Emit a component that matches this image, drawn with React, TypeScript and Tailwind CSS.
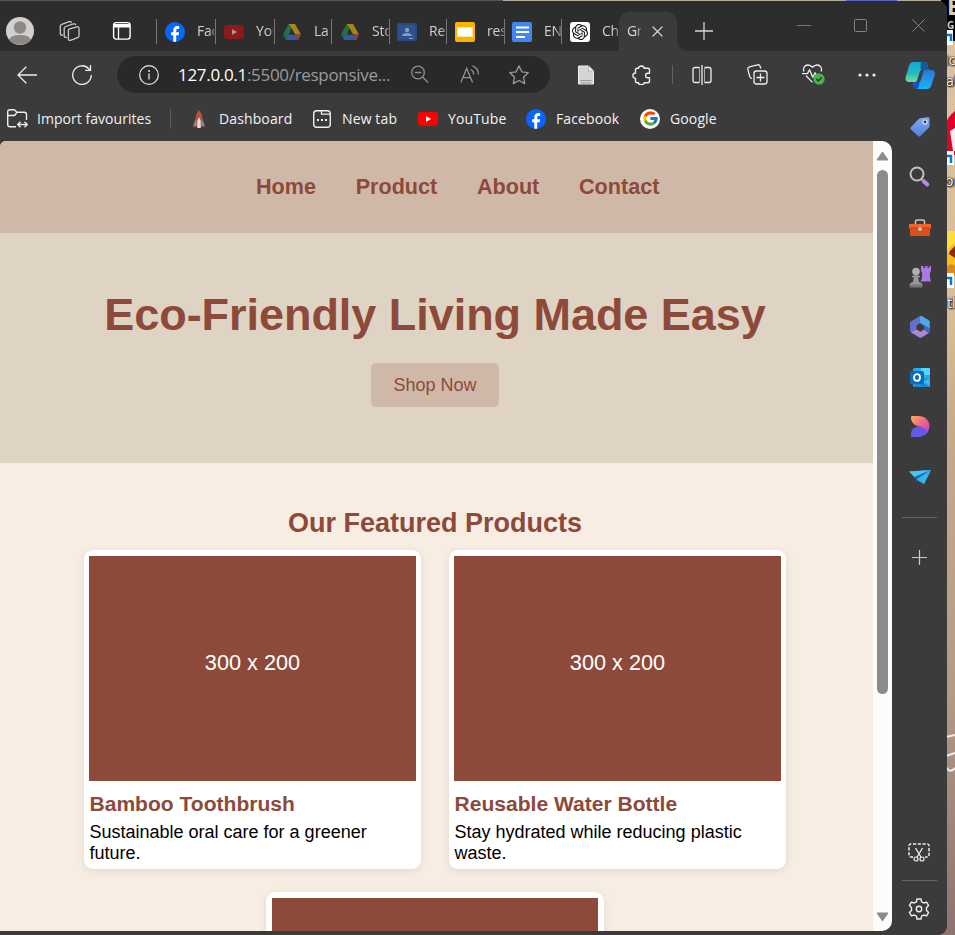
import React from "react";
import { SiOpenai } from "react-icons/si";
import { FcGoogle } from "react-icons/fc";

type Kids = { children: React.ReactNode };

function Svg({ w, h, children, className = "" }: Kids & { w: number; h: number; className?: string }) {
  return (
    <svg width={w} height={h} viewBox={`0 0 ${w} ${h}`} fill="none" className={`shrink-0 ${className}`}>
      {children}
    </svg>
  );
}

function FacebookLogo() {
  return (
    <Svg w={20} h={20}>
      <circle cx="10" cy="10" r="10" fill="#0866ff" />
      <path d="M8.300 19.800v-6.500H6.100v-3h2.200V8.600c0-3 1.400-4.500 4.200-4.500.6 0 1.400.1 1.700.2v2.700c-.3 0-.8-.1-1.200-.1-1.400 0-1.800.6-1.800 1.900v1.500h2.900l-.5 3h-2.400v6.500z" fill="#fff" />
    </Svg>
  );
}

function YouTubeLogo({ dim = false }: { dim?: boolean }) {
  return (
    <Svg w={20} h={20}>
      <rect x="0" y="3" width="20" height="14" rx="3.500" fill={dim ? "#8c1a1c" : "#ff0000"} />
      <path d="M8 7.200l5.200 2.800L8 12.800z" fill={dim ? "#a99" : "#fff"} />
    </Svg>
  );
}

function DriveLogo() {
  return (
    <Svg w={20} h={20}>
      <path d="M6.500 2h4L7 12.500 4 18 1 12.500z" fill="#1c6b41" />
      <path d="M7 2h3L7.500 12.500H1z" fill="#256f43" />
      <path d="M7 2h6l6 10.500h-6z" fill="#a8841c" />
      <path d="M4.500 12.500H19l-3 5.500H4z" fill="#315b9e" />
      <path d="M13 12.500h6L16 18z" fill="#a5382f" />
      <path d="M10 7.300l3 5.200H7z" fill="#2e2e2e" />
    </Svg>
  );
}

function ClassroomLogo() {
  return (
    <Svg w={20} h={20}>
      <rect y="1" width="20" height="18" rx="1.500" fill="#2c4a80" />
      <rect x="2" y="3" width="16" height="14" fill="#2f5190" />
      <circle cx="10" cy="8" r="2.200" fill="#8f9cb5" />
      <path d="M5 14c0-2 2.500-3 5-3s5 1 5 3z" fill="#8f9cb5" />
      <path d="M12 16h4v1h-4z" fill="#8f9cb5" />
    </Svg>
  );
}

function SlidesLogo() {
  return (
    <Svg w={20} h={20}>
      <rect width="20" height="20" rx="2" fill="#f9b400" />
      <rect x="2.500" y="5.500" width="15" height="9" fill="#fff" stroke="#fde29a" />
    </Svg>
  );
}

function DocsLogo() {
  return (
    <Svg w={20} h={20}>
      <rect width="20" height="20" rx="2" fill="#4285f4" />
      <path d="M4 5.500h13M4 10h13M4 15h9" stroke="#fff" strokeWidth="2" />
    </Svg>
  );
}

function ChatLogo() {
  return (
    <div className="flex h-5 w-5 shrink-0 items-center justify-center rounded-[3px] bg-white">
      <SiOpenai size={16} color="#111" />
    </div>
  );
}

function GoogleLogo() {
  return (
    <div className="flex h-5 w-5 shrink-0 items-center justify-center rounded-full bg-white">
      <FcGoogle size={17} />
    </div>
  );
}

const tabs = [
  { text: "Face", w: "w-[59px]", pad: "pl-[8px]", icon: <FacebookLogo /> },
  { text: "You", w: "w-[59px]", pad: "pl-[8px]", icon: <YouTubeLogo dim /> },
  { text: "La", w: "w-[57px]", pad: "pl-[7px]", icon: <DriveLogo /> },
  { text: "Sto", w: "w-[58px]", pad: "pl-[8px]", icon: <DriveLogo /> },
  { text: "Re", w: "w-[57px]", pad: "pl-[7px]", icon: <ClassroomLogo /> },
  { text: "res", w: "w-[58px]", pad: "pl-[8px]", icon: <SlidesLogo /> },
  { text: "EN", w: "w-[57px]", pad: "pl-[7px]", icon: <DocsLogo /> },
  { text: "Ch", w: "w-[58px]", pad: "pl-[8px]", icon: <ChatLogo /> },
];

function TitleBar() {
  return (
    <div className="flex h-[50px] shrink-0 bg-[#2d2d2d]">
      <div className="flex w-[156px] shrink-0 items-center pl-[6px] pt-[10px]">
        <Svg w={28} h={28}>
          <circle cx="14" cy="14" r="14" fill="#d2d0ce" />
          <path d="M3 22.500c2-3.500 6-4.500 11-4.500s9 1 11 4.500A14 14 0 0 1 3 22.500z" fill="#8e8883" />
          <circle cx="14" cy="10.500" r="6.200" fill="#8e8883" />
        </Svg>
        <Svg w={22} h={22} className="ml-[25px]">
          <g stroke="#c9c9c9" strokeWidth="1.300" strokeLinejoin="round" strokeLinecap="round">
            <path d="M9.800 9.200l8.200-2.400c1.200-.3 2 .2 2 1.400v7.600c0 1-.5 1.600-1.400 1.900l-7.200 2.600c-1.200.4-2-.1-2-1.300v-8c0-1 0-1.500.4-1.800z" />
            <path d="M7.500 17.300c-1.500.3-2.300-.2-2.300-1.500V8.400c0-1 .5-1.600 1.400-1.900l7.800-2.600c1-.3 1.900 0 2.100.8" />
            <path d="M3.600 15c-1.500.3-2.300-.2-2.300-1.500V6.200c0-1 .5-1.600 1.400-1.900L10.200 1.700c1-.3 1.900 0 2.100.8" />
          </g>
        </Svg>
        <Svg w={20} h={20} className="ml-[31px]">
          <rect x="1.600" y="1.600" width="16.500" height="16.500" rx="2.500" stroke="#fff" strokeWidth="1.400" />
          <path d="M1.500 3h16.500v3.500H1.500z" fill="#fff" />
          <path d="M6.500 5v13" stroke="#fff" strokeWidth="1.300" />
        </Svg>
      </div>
      <div className="flex w-[463px] items-center overflow-hidden rounded-br-[10px] pt-[11px]">
        {tabs.map((t, i) => (
          <div key={i} className={`flex h-[25px] shrink-0 items-center border-l border-[#777] ${t.pad} ${t.w}`}>
            {t.icon}
            <span className="-mt-[2px] ml-[12px] w-[17px] overflow-hidden whitespace-nowrap text-[14px] tracking-[-0.2px] text-[#cfcfcf] [mask-image:linear-gradient(to_right,#000_12px,#0005_18px)]">{t.text}</span>
          </div>
        ))}
      </div>
      <div className="flex w-[58px] items-end bg-[linear-gradient(#2d2d2d_10px,#3b3b3b_10px)]">
        <div className="flex h-[39px] w-[58px] items-center rounded-t-[10px] bg-[#3b3b3b] pl-[8px] shadow-[0_-10px_0_#2d2d2d]">
          <span className="-mt-[2px] w-[14px] overflow-hidden text-[14px] tracking-[-0.4px] text-[#ddd] [mask-image:linear-gradient(to_right,#000_8px,#0006_14px)]">Gr</span>
          <Svg w={11} h={11} className="ml-[11px]">
            <path d="M.6.6l9.800 9.800M10.400.6L.6 10.400" stroke="#ddd" strokeWidth="1.300" />
          </Svg>
        </div>
      </div>
      <div className="flex flex-1 bg-[#3b3b3b]">
        <div className="flex flex-1 items-start rounded-bl-[10px] bg-[#2d2d2d]">
          <Svg w={18} h={18} className="ml-[18px] mt-[21px]">
            <path d="M9 0v18M0 9h18" stroke="#d5d5d5" strokeWidth="1.300" />
          </Svg>
          <Svg w={14} h={2} className="ml-[84px] mt-[24px]">
            <path d="M0 .5h14" stroke="#777" />
          </Svg>
          <Svg w={13} h={13} className="ml-[43px] mt-[18px]">
            <rect x=".5" y=".5" width="12" height="12" rx="1" stroke="#858585" />
          </Svg>
          <Svg w={13} h={13} className="ml-[45px] mt-[18px]">
            <path d="M.5.5l12 12M12.500.5l-12 12" stroke="#858585" />
          </Svg>
        </div>
      </div>
    </div>
  );
}

function Cell({ w, children }: Kids & { w: string }) {
  return <div className={`flex shrink-0 items-center justify-center ${w}`}>{children}</div>;
}

function Toolbar() {
  return (
    <div className="flex h-[47px] shrink-0">
      <Cell w="w-[54px]">
        <Svg w={20} h={18}>
          <path d="M20 9H1M9.300.7L1 9l8.300 8.300" stroke="#eee" strokeWidth="1.300" />
        </Svg>
      </Cell>
      <Cell w="w-[56px]">
        <Svg w={20} h={20}>
          <path d="M19.300 10a9.300 9.300 0 1 1-2.500-6.300l1.200 1.200M18.500 0v5.300h-5.300" stroke="#eee" strokeWidth="1.300" />
        </Svg>
      </Cell>
      <div className="ml-[7px] mt-[5px] flex h-[37px] w-[433px] shrink-0 items-center rounded-full bg-[#292929] pl-[22px]">
        <Svg w={20} h={20}>
          <circle cx="10" cy="10" r="9.300" stroke="#e5e5e5" strokeWidth="1.200" />
          <path d="M10 8.500v6" stroke="#e5e5e5" strokeWidth="1.300" />
          <circle cx="10" cy="6" r="1" fill="#e5e5e5" />
        </Svg>
        <span className="ml-[19px] w-[233px] whitespace-nowrap text-[17px] leading-[20px] tracking-[-0.31px] text-[#9b9b9b]">
          <span className="text-white">127.0.0.1</span>:5500/responsive...
        </span>
        <Svg w={19} h={19}>
          <circle cx="7" cy="7.500" r="6.300" stroke="#8f8f8f" strokeWidth="1.300" />
          <path d="M3.800 7.500h6.500M11.600 12l5.500 5.500" stroke="#8f8f8f" strokeWidth="1.300" />
        </Svg>
        <Svg w={20} h={20} className="ml-[30px]">
          <path d="M.8 17.500L6.700 3.500l5.900 14M2.800 12.700h7.800M10.500 4.500c2 .8 3.200 2.600 3.200 5M12.500.9c3.800 1.400 5.900 4.300 5.900 8.600" stroke="#929292" strokeWidth="1.300" />
        </Svg>
        <Svg w={20} h={20} className="ml-[29px]">
          <path d="M10 .9l2.800 5.900 6.400.9-4.700 4.500 1.200 6.400-5.700-3.100-5.700 3.100 1.200-6.400L.8 7.700l6.400-.9z" stroke="#999" strokeWidth="1.300" strokeLinejoin="round" />
        </Svg>
      </div>
      <div className="w-[8px] shrink-0" />
      <Cell w="w-[56px]">
        <Svg w={18} h={20}>
          <path d="M1.500 1h10l5 5v13h-15z" fill="#d4d4d4" stroke="#eee" />
          <path d="M11.500 1v5h5" fill="#f4f4f4" stroke="#999" strokeWidth=".6" />
          <path d="M3.500 15.500h11M3.500 18h11" stroke="#9a9a9a" />
        </Svg>
      </Cell>
      <Cell w="w-[56px]">
        <Svg w={20} h={20}>
          <path d="M6.500 3.200c0-3 5.600-3 5.600 0H16c1 0 1.500.5 1.500 1.500v3.600h-1.800c-2.800 0-2.800 4.400 0 4.400h1.800v3.600c0 1-.5 1.500-1.500 1.500h-3.900c0 2.600-5.600 2.600-5.600 0H5c-1 0-1.500-.5-1.500-1.500v-3C0 13.300 0 8 3.500 8V4.700c0-1 .5-1.500 1.500-1.500z" stroke="#eee" strokeWidth="1.400" strokeLinejoin="round" />
        </Svg>
      </Cell>
      <Cell w="w-[4px]"><div className="h-[19px] w-px bg-[#626262]" /></Cell>
      <Cell w="w-[55px]">
        <Svg w={20} h={20}>
          <path d="M7.500 17.500H3c-1.200 0-2-.8-2-2v-11c0-1.200.8-2 2-2h4.500M12.500 2.500H17c1.200 0 2 .8 2 2v11c0 1.200-.8 2-2 2h-4.500M10 0v20" stroke="#eee" strokeWidth="1.300" />
          <path d="M7.500 2.500v15M12.500 2.500v15" stroke="#aaa" />
        </Svg>
      </Cell>
      <Cell w="w-[56px]">
        <Svg w={21} h={21}>
          <rect x="7" y="7" width="13" height="13" rx="2.500" stroke="#eee" strokeWidth="1.300" />
          <path d="M13.500 9.500v8M9.500 13.500h8M5 14.400c-1.300 0-1.900-.7-2.300-1.800L.9 5.300C.6 4 1.100 3.200 2.400 2.800l8.200-2c1.300-.3 2 .1 2.500 1.400l.6 2.300" stroke="#eee" strokeWidth="1.300" />
        </Svg>
      </Cell>
      <Cell w="w-[56px]">
        <Svg w={23} h={21}>
          <path d="M1.800 7.500C.5 4.200 2.700 1 6 1c2 0 3.200.9 4.500 2.300C11.800 1.900 13 1 15 1c3.500 0 5.500 3.200 4.200 6.500M4 11.800l6.500 6.600M0 9.600h5.500l2-3.800 3.300 7.500 2.300-4.500 1.200 1.800H18" stroke="#eee" strokeWidth="1.300" strokeLinejoin="round" />
          <circle cx="17" cy="15" r="5.700" fill="#4caf50" />
          <path d="M14.300 15l2 2 3.500-3.700" stroke="#163f1a" strokeWidth="1.300" />
        </Svg>
      </Cell>
      <Cell w="w-[51px]">
        <Svg w={18} h={4}>
          <circle cx="2" cy="2" r="1.600" fill="#eee" />
          <circle cx="9" cy="2" r="1.600" fill="#eee" />
          <circle cx="16" cy="2" r="1.600" fill="#eee" />
        </Svg>
      </Cell>
    </div>
  );
}

const bookmarks = [
  {
    text: "Dashboard",
    w: "w-[123px]",
    icon: (
      <Svg w={20} h={20}>
        <path d="M10 1c2 2.500 3.500 6 3.500 9v8h-7v-8c0-3 1.500-6.500 3.500-9z" fill="#b5533c" />
        <path d="M10 8l1.700 4v7H8.300v-7z" fill="#e4dedb" />
        <path d="M7 9.500l-2.500 6V18L8 16.500zM13 9.500l2.500 6V18L12 16.500z" fill="#8d8784" />
      </Svg>
    ),
  },
  {
    text: "New tab",
    w: "w-[106px]",
    icon: (
      <Svg w={20} h={20}>
        <rect x="1.700" y="1.700" width="16.600" height="16.600" rx="3" stroke="#eee" strokeWidth="1.400" />
        <path d="M9.500 1.700v3.500h8.800" stroke="#eee" strokeWidth="1.300" />
        <path d="M5 11h2M9 11h2M13 11h2" stroke="#eee" strokeWidth="2" />
      </Svg>
    ),
  },
  { text: "YouTube", w: "w-[108px]", icon: <YouTubeLogo /> },
  { text: "Facebook", w: "w-[114px]", icon: <FacebookLogo /> },
  { text: "Google", w: "w-[100px]", icon: <GoogleLogo /> },
];

function Bookmarks() {
  return (
    <div className="flex h-[43px] shrink-0 items-center pb-[2px] pl-[7px] text-[14px] leading-[20px] text-[#f2f2f2]">
      <div className="flex w-[163px] items-center gap-[9px]">
        <Svg w={21} h={20}>
          <path d="M9 17.800H3c-1.500 0-2.300-.8-2.300-2.300V3C.7 1.500 1.500.8 3 .8h3.500c1 0 1.500.3 2 1l1.200 1.500h7.500c1.500 0 2.300.8 2.300 2.300V11M.7 6.500h5.800c1 0 1.500-.3 2-1l1.200-2.200" stroke="#eee" strokeWidth="1.400" />
          <path d="M11 15.500h9M13.500 12.700l-2.800 2.800 2.800 2.800M17.500 12.700l2.800 2.800-2.800 2.800" stroke="#eee" strokeWidth="1.300" />
        </Svg>
        <span className="whitespace-nowrap tracking-[0.040px]">Import favourites</span>
      </div>
      <div className="mr-[18px] h-[20px] w-px bg-[#5c5c5c]" />
      {bookmarks.map((b) => (
        <div key={b.text} className={`flex shrink-0 items-center gap-[10px] ${b.w}`}>
          {b.icon}
          <span className="whitespace-nowrap tracking-[0.120px]">{b.text}</span>
        </div>
      ))}
    </div>
  );
}

function Card({ title, text }: { title: string; text: string }) {
  return (
    <article className="h-[319px] w-[337px] shrink-0 rounded-[9px] bg-white px-[5px] pt-[6px] shadow-[0_2px_8px_rgba(0,0,0,0.09)]">
      <div className="flex h-[225px] items-center justify-center bg-[#8d4a3a] pb-[10px] text-[21.700px] text-white">300 x 200</div>
      <h3 className="mt-[11px] pl-[0.5px] text-[21.060px] leading-[24px] font-bold text-[#8d4a3a]">{title}</h3>
      <p className="mt-[6px] pl-[0.5px] text-[18px] leading-[21px] text-black">{text}</p>
    </article>
  );
}

function ShopPage() {
  return (
    <div className="w-[873px] overflow-hidden bg-[#f7ede2] font-['Liberation_Sans',Arial,sans-serif] text-[#8d4a3a]">
      <nav className="flex h-[92px] gap-[39.700px] bg-[#d0b8a8] pt-[33px] pl-[256px] text-[21.600px] leading-[25px] font-bold">
        <a>Home</a>
        <a>Product</a>
        <a>About</a>
        <a>Contact</a>
      </nav>
      <section className="flex h-[230px] flex-col items-center bg-[#dfd3c3] pt-[56px] pr-[3px]">
        <h1 className="text-[45px] leading-[52px] font-bold tracking-[-0.040px] whitespace-nowrap">Eco-Friendly Living Made Easy</h1>
        <button className="mt-[22px] h-[44px] w-[128px] rounded-[5px] bg-[#d0b8a8] text-[18px]">Shop Now</button>
      </section>
      <section className="pt-[45px] pr-[3px]">
        <h2 className="text-center text-[27px] leading-[31px] font-bold">Our Featured Products</h2>
        <div className="mt-[11px] flex flex-wrap justify-center gap-x-[28px] gap-y-[23px]">
          <Card title="Bamboo Toothbrush" text="Sustainable oral care for a greener future." />
          <Card title="Reusable Water Bottle" text="Stay hydrated while reducing plastic waste." />
          <div className="mr-px h-[60px] w-[338px] rounded-t-[9px] bg-white px-[6px] pt-[6px] shadow-[0_2px_8px_rgba(0,0,0,0.09)]">
            <div className="h-full bg-[#8d4a3a]" />
          </div>
        </div>
      </section>
    </div>
  );
}

function Scrollbar() {
  return (
    <div className="flex w-[19px] shrink-0 flex-col items-center bg-[#fcfcfc]">
      <Svg w={13} h={10} className="mt-[10px]">
        <path d="M6.500 1l5.500 8H1z" fill="#8b8b8b" stroke="#8b8b8b" strokeLinejoin="round" />
      </Svg>
      <div className="mt-[9px] h-[524px] w-[11px] rounded-full bg-[#8b8b8b]" />
      <div className="flex-1" />
      <Svg w={13} h={10} className="mb-[9px]">
        <path d="M1 1h11L6.500 9z" fill="#8b8b8b" stroke="#8b8b8b" strokeLinejoin="round" />
      </Svg>
    </div>
  );
}

const sideIcons = [
  <Svg w={22} h={22}>
    <path d="M9.500 3.200c.5-.5 1-.8 1.700-.9L18.500 1.200c1.500 0 2 .5 2 1.800V10c0 .7-.2 1.200-.8 1.800L11.500 20c-.8.8-1.700.8-2.500 0l-7-6.500c-.8-.8-.8-1.700 0-2.500z" fill="url(#tagfill)" />
    <circle cx="16" cy="6" r="2" fill="#333" stroke="#dfe6f7" strokeWidth="1.200" />
    <defs>
      <linearGradient id="tagfill" x1="0" y1="0" x2="0" y2="1">
        <stop stopColor="#7fabf0" />
        <stop offset="1" stopColor="#4f7fe0" />
      </linearGradient>
    </defs>
  </Svg>,
  <Svg w={22} h={22}>
    <path d="M12 13l2.500 2.500" stroke="#999" strokeWidth="2" />
    <circle cx="8" cy="8" r="6.500" stroke="#c2c2c0" strokeWidth="2" />
    <path d="M14.800 15.200l3.500 3.300" stroke="#b489ee" strokeWidth="4" strokeLinecap="round" />
  </Svg>,
  <Svg w={22} h={18} className="relative top-px">
    <path d="M6.500 5V2.500C6.500 1.500 7 1 8 1h6c1 0 1.500.5 1.500 1.500V5" stroke="#c8c8c8" strokeWidth="1.500" />
    <path d="M1 5h20c.6 0 1 .3 1 1v4H0V6c0-.7.400-1 1-1z" fill="#f0642c" />
    <path d="M1 9.500h20V16c0 .7-.3 1-1 1H2c-.7 0-1-.3-1-1z" fill="#e04f16" />
    <path d="M0 9h22" stroke="#b83a0e" />
    <circle cx="11" cy="10" r="2" fill="#c8c8c8" />
  </Svg>,
  <Svg w={22} h={22}>
    <path d="M12 0h2.500v2h1.700V0h2.400v2h1.700V0H22v5l-1.200 2 .2 5 1 3.500H11.500L13 12l.2-5L12 5z" fill="#a97be2" />
    <circle cx="7" cy="5.500" r="3.800" fill="#b0b0b0" />
    <path d="M3 10c0-1 8-1 8 0v1.200H9.200L10 16c2 .7 3.500 1.500 3.500 3H.5c0-1.500 1.500-2.300 3.500-3l.8-4.800H3z" fill="#999" />
    <path d="M.5 18.500h13v2c0 .6-.4 1-1 1h-11c-.6 0-1-.4-1-1z" fill="#777" />
  </Svg>,
  <Svg w={22} h={22}>
    <path d="M7 2.500L11 .3c1-.4 1.500-.4 2.500.1l6 3.600c.8.5 1.300 1.200 1.300 2.200v6.500L15 9.500 11 7l-4 2.500z" fill="#50a6ee" />
    <path d="M8 2L2.500 5C1.500 5.600 1 6.300 1 7.500V14c0 1 .5 2 1.500 2.700L7.500 14V8.500L11 6.300V.3z" fill="#6470cc" />
    <path d="M2 16.500l5.500-3 4 2.300 3.500-2.300 5.800-1V15c0 1-.5 1.700-1.400 2.300l-6.400 4c-1 .6-2 .6-3 0z" fill="#b283d6" />
    <path d="M15 9l5.800 3.500V15c0 1-.4 1.600-1.200 2.200L15 13.500z" fill="#3c65c5" />
  </Svg>,
  <Svg w={22} h={22} className="relative top-px">
    <rect x="4" y="1" width="17" height="19" rx="1.500" fill="#28a8e8" />
    <path d="M12 1h7.500c1 0 1.500.5 1.500 1.500V8h-9z" fill="#50d9ff" />
    <path d="M5 13l16-2v7.500c0 1-.5 1.500-1.500 1.500h-13C5.500 20 5 19.500 5 18.500z" fill="#148bd2" />
    <path d="M13 14.500l8 5V11z" fill="#35b8f1" />
    <rect x="1" y="4" width="14" height="13" rx="1.500" fill="#0a6cbd" />
    <ellipse cx="8" cy="10.500" rx="3" ry="3.300" stroke="#fff" strokeWidth="1.800" />
  </Svg>,
  <Svg w={22} h={22}>
    <path d="M2 1.500C2 .5 2.500 0 3.500 0h6C15.500 0 20.500 4 20.500 10c0 3-1.500 5.500-3 7.500L10 10.500C5 9.500 2 6 2 1.500z" fill="url(#petal)" />
    <path d="M3 21c-.5 0-1-.5-1-1v-2c0-4.500 3.500-7.500 7.500-7.500 4 0 7 2 9 5.500-2.500 3.500-5.500 5-9.500 5z" fill="#6759e6" />
    <defs>
      <linearGradient id="petal" x1="0" y1="0" x2="1" y2="1">
        <stop stopColor="#ffb05a" />
        <stop offset=".5" stopColor="#f1638c" />
        <stop offset="1" stopColor="#b43cf0" />
      </linearGradient>
    </defs>
  </Svg>,
  <Svg w={22} h={18}>
    <path d="M0 3.500L22 2l-7 14-7-4z" fill="#2599dc" />
    <path d="M0 3.500L22 2 5.500 9z" fill="#4bc2f2" />
    <path d="M5.500 9L22 2 8 11v4z" fill="#1269ad" />
    <path d="M8 11.500L22 2l-7 14z" fill="#35b5ee" />
  </Svg>,
];

function Sidebar() {
  return (
    <aside className="flex w-[55px] shrink-0 flex-col items-center">
      <div className="flex h-[51px] shrink-0 items-center pb-[3px]">
        <Svg w={30} h={27}>
          <defs>
            <linearGradient id="cpa" x1="0" y1="0" x2="0" y2="1">
              <stop stopColor="#13a7e0" />
              <stop offset=".55" stopColor="#23b9c1" />
              <stop offset="1" stopColor="#75df91" />
            </linearGradient>
            <linearGradient id="cpb" x1="0" y1="0" x2="0" y2="1">
              <stop stopColor="#2f75d8" />
              <stop offset="1" stopColor="#12b8f7" />
            </linearGradient>
          </defs>
          <path d="M8.500 0H19c2 0 2.800 1 3.300 3l1.400 5H18l-4.500 9.500c-.8 1.800-1.800 2.500-4 2.500H4.500C1.500 20 0 18 .7 15L4 4C4.800 1.300 6 0 8.500 0z" fill="url(#cpa)" />
          <path d="M16 0h3c2 0 2.800 1 3.300 3l1.400 5H17.500c-1.500 0-2.200-1-2-3z" fill="#165a9c" />
          <path d="M8 20h2c2 0 3-.7 3.700-2.500L17.500 8h8.500c3 0 4.500 2 3.700 5l-3.300 10c-.8 2.700-2 4-4.500 4H12c-2 0-2.800-1-3.200-3z" fill="url(#cpb)" />
          <path d="M8 20h2c2 0 3-.7 3.700-2.500h1.800L13 26.500 12 27c-2 0-2.800-1-3.200-3z" fill="#174ed3" />
          <path d="M15 9.500c.4-1 .8-1.500 2-1.500h2l-3 9.500c-.4 1.500-1 2.300-2.500 2.500h-2z" fill="#3b3f46" />
        </Svg>
      </div>
      {sideIcons.map((icon, i) => (
        <div key={i} className="flex h-[50px] shrink-0 items-center">{icon}</div>
      ))}
      <div className="mt-[15px] h-px w-[35px] bg-[#666]" />
      <Svg w={15} h={15} className="mt-[32px] mr-px">
        <path d="M7.500 0v15M0 7.500h15" stroke="#ccc" strokeWidth="1.200" />
      </Svg>
      <div className="flex-1" />
      <Svg w={22} h={21} className="mr-px">
        <path d="M5 15H3c-1.300 0-2-.7-2-2V4c0-1.300.7-2 2-2h16c1.300 0 2 .7 2 2v9c0 1.300-.7 2-2 2h-2" stroke="#eee" strokeWidth="1.500" strokeDasharray="3.200 1.600" />
        <path d="M7.500 6l5.700 9.500M14.500 6l-5.700 9.500" stroke="#eee" strokeWidth="1.300" />
        <circle cx="8" cy="17" r="2" stroke="#eee" strokeWidth="1.200" />
        <circle cx="14" cy="17" r="2" stroke="#eee" strokeWidth="1.200" />
      </Svg>
      <div className="mt-[17px] h-px w-[35px] bg-[#666]" />
      <Svg w={22} h={22} className="mt-[17px] mr-px mb-[15px]">
        <path d="M9 1h4l.6 2.800 2.200 1.200 2.800-.9 2 3.500L18.500 9.500v3l2.100 1.900-2 3.500-2.800-.9-2.200 1.200L13 21H9l-.6-2.800L6.200 17l-2.800.9-2-3.500 2.100-1.900v-3L1.400 7.600l2-3.500 2.800.9 2.200-1.200z" stroke="#eee" strokeWidth="1.400" strokeLinejoin="round" />
        <circle cx="11" cy="11" r="2.700" stroke="#eee" strokeWidth="1.400" />
      </Svg>
    </aside>
  );
}

/* Sliver of desktop visible to the right of the browser window. */
function Desktop() {
  return (
    <div className="absolute inset-y-0 right-0 w-[14px] overflow-hidden bg-[linear-gradient(#dcc3a2,#d9bd99_34%,#c8aa8c_45%,#b49a88_74%,#8c7370)] text-[14px] leading-none text-white">
      <div className="absolute top-0 right-0 h-[41px] w-full bg-black" />
      <span className="absolute top-[-4px] left-[6px] text-[23px] leading-[20px] font-bold text-[#ccc]">E</span>
      <span className="absolute top-[20px] left-[6px] text-[10px] leading-[10px] font-bold text-[#ccc]">G</span>
      <div className="absolute top-[30px] left-0 h-[15px] w-[12px] bg-white" />
      <svg className="absolute top-[33px] left-[6px]" width="6" height="9"><path d="M0 2h4v6" stroke="#0878cf" strokeWidth="2.500" fill="none" /></svg>
      <span className="absolute top-[53px] left-[4px] [text-shadow:0_0_2px_#000,1px_1px_2px_#000,0_0_1px_#000]">ic</span>
      <span className="absolute top-[74px] left-[5px] [text-shadow:0_0_2px_#000,1px_1px_2px_#000,0_0_1px_#000]">al</span>
      <svg className="absolute top-[108px] left-0" width="14" height="57">
        <path d="M14 3Q6 9 4 18v29h10z" fill="#df002b" />
        <path d="M9 23l5-3v23h-2z" fill="#eee" />
        <rect x="5" y="43" width="8" height="15" fill="#fff" />
        <path d="M6 48h4v7" stroke="#0878cf" strokeWidth="2.500" fill="none" />
      </svg>
      <span className="absolute top-[174px] left-[4px] [text-shadow:0_0_2px_#000,1px_1px_2px_#000,0_0_1px_#000]">or</span>
      <svg className="absolute top-[231px] left-0" width="14" height="58">
        <rect width="14" height="42" fill="#f5bd23" />
        <path d="M4 0h10v12Q8 15 4 25z" fill="#ffdc3b" />
        <path d="M9 20l5-5v12l-6-4z" fill="#8a2b13" />
        <path d="M5 36q5-5 9-1v10H5z" fill="#db8b1b" />
        <rect x="5" y="42" width="8" height="15" fill="#fff" />
        <path d="M6 47h4v7" stroke="#0878cf" strokeWidth="2.500" fill="none" />
      </svg>
      <span className="absolute top-[296px] left-[6px] [text-shadow:0_0_2px_#000,1px_1px_2px_#000,0_0_1px_#000]">tl</span>
      <svg className="absolute top-[730px] left-0" width="14" height="50">
        <path d="M5 7l9-2M5 26l9-3M5 37q4 7 9 1" stroke="#eee" strokeWidth="2" fill="none" />
      </svg>
    </div>
  );
}

export default function App() {
  return (
    <div className="relative h-[935px] w-[955px] overflow-hidden bg-[#555] font-['Open_Sans','Noto_Sans',sans-serif]">
      <div className="absolute top-0 left-[503px] h-[12px] w-[440px] bg-[linear-gradient(to_right,#b7aa9b_343px,#5b65c0_343px,#5b65c0_394px,#b7aa9b_394px)]" />
      <Desktop />
      <div className="relative pt-px">
        <div className="flex h-[934px] w-[947px] flex-col overflow-hidden rounded-r-[9px] bg-[#3b3b3b]">
          <TitleBar />
          <div className="flex min-h-0 flex-1">
            <div className="flex w-[892px] shrink-0 flex-col">
              <Toolbar />
              <Bookmarks />
              <main className="flex h-[790px] w-[892px] overflow-hidden rounded-tl-[6px] rounded-r-[10px]">
                <ShopPage />
                <Scrollbar />
              </main>
            </div>
            <Sidebar />
          </div>
        </div>
      </div>
    </div>
  );
}
